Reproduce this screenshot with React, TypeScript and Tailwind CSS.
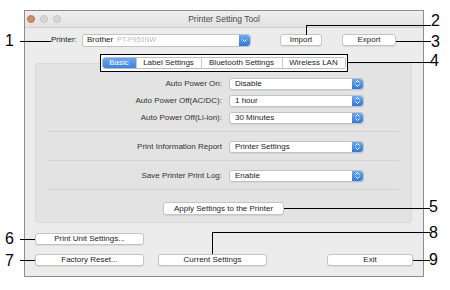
import React from "react";

// 드롭다운 오른쪽 파란 화살표 박스
function Arrow({ single }: { single?: boolean }) {
  return (
    <div className="w-[11px] h-full rounded-r-[3px] bg-gradient-to-b from-[#6eaaf0] to-[#2d78dc] flex items-center justify-center">
      {single ? (
        <svg width="7" height="7" viewBox="0 0 7 7">
          <path d="M1.5 2.5 L3.5 4.5 L5.5 2.5" stroke="white" strokeWidth="1" fill="none" />
        </svg>
      ) : (
        <svg width="7" height="9" viewBox="0 0 7 9">
          <path d="M1.5 3.5 L3.5 1.5 L5.5 3.5" stroke="white" strokeWidth="1" fill="none" />
          <path d="M1.5 5.5 L3.5 7.5 L5.5 5.5" stroke="white" strokeWidth="1" fill="none" />
        </svg>
      )}
    </div>
  );
}

function Select({ value, className }: { value: React.ReactNode; className: string }) {
  return (
    <div
      className={`flex items-stretch bg-white border border-[#c2c2c2] rounded-[3px] shadow-[0_1px_0_rgba(0,0,0,0.06)] ${className}`}
    >
      <div className="flex-1 flex items-center pl-[5px] text-[8px] text-[#1a1a1a] whitespace-nowrap overflow-hidden">
        {value}
      </div>
      <Arrow />
    </div>
  );
}

function Button({ label, className }: { label: string; className: string }) {
  return (
    <div
      className={`flex items-center justify-center bg-white border border-[#c4c4c4] rounded-[3px] shadow-[0_1px_0_rgba(0,0,0,0.08)] text-[8px] text-[#222] whitespace-nowrap ${className}`}
    >
      {label}
    </div>
  );
}

function Row({ label, value }: { label: string; value: string }) {
  return (
    <div className="flex items-center h-[17px]">
      <div className="w-[186px] text-right text-[8px] text-[#333] whitespace-nowrap">{label}</div>
      <Select value={value} className="ml-[7px] w-[135px] h-[12px]" />
    </div>
  );
}

const tabs = [
  { name: "Basic", w: "w-[34px]" },
  { name: "Label Settings", w: "w-[65px]" },
  { name: "Bluetooth Settings", w: "w-[81px]" },
  { name: "Wireless LAN", w: "w-[62px]" },
];

export default function App() {
  return (
    <div className="relative w-[450px] h-[290px] bg-white overflow-hidden pt-[10px] pl-[24px] font-['Liberation_Sans',Arial,sans-serif]">
      {/* 창 */}
      <div className="w-[400px] h-[267px] border border-[#8d8d8d] bg-[#ececec] flex flex-col">
        {/* 타이틀바 */}
        <div className="h-[17px] shrink-0 flex items-center border-b border-[#cdcdcd] bg-gradient-to-b from-[#eeeeee] to-[#e2e2e2]">
          <div className="w-[60px] flex items-center gap-[5px] pl-[2px]">
            <div className="w-[8px] h-[8px] rounded-full bg-[#cf8a68] border border-[#b9755a]" />
            <div className="w-[8px] h-[8px] rounded-full bg-[#d6d6d6] border border-[#c4c4c4]" />
            <div className="w-[8px] h-[8px] rounded-full bg-[#d6d6d6] border border-[#c4c4c4]" />
          </div>
          <div className="flex-1 text-center text-[8.5px] text-[#4a4a4a]">Printer Setting Tool</div>
          <div className="w-[60px]" />
        </div>

        {/* 프린터 선택 */}
        <div className="pt-[5px] pl-[26px]">
          <div className="flex items-center h-[14px]">
            <div className="w-[31px] text-[8px] text-[#222]">Printer:</div>
            <div className="w-[169px] h-[13px] flex items-stretch bg-white border border-[#c2c2c2] rounded-[3px]">
              <div className="flex-1 flex items-center pl-[4px] gap-[4px] text-[8px] text-[#1a1a1a]">
                Brother
                <span className="text-[7px] text-[#b8b8b8] blur-[0.6px]">PT-P950NW</span>
              </div>
              <Arrow single />
            </div>
            <Button label="Import" className="ml-[29px] w-[42px] h-[12px]" />
            <Button label="Export" className="ml-[20px] w-[54px] h-[12px]" />
          </div>
        </div>

        {/* 설정 패널 */}
        <div className="mt-[16px] ml-[10px] w-[377px] h-[160px] shrink-0 bg-[#e3e3e3] border border-[#d9d9d9] rounded-[3px] flex flex-col">
          <div className="-mt-[10px] self-center h-[18px] border border-black bg-white px-[1px] pt-[2px]">
            <div className="flex h-[12px] border border-[#bdbdbd] rounded-[3px] overflow-hidden">
              {tabs.map((t, i) => (
                <div
                  key={t.name}
                  className={`${t.w} flex items-center justify-center text-[8px] whitespace-nowrap ${
                    i === 0
                      ? "bg-gradient-to-b from-[#6aa6ee] to-[#3a83e0] text-white"
                      : "bg-white text-[#222]"
                  } ${i < tabs.length - 1 ? "border-r border-[#c8c8c8]" : ""}`}
                >
                  {t.name}
                </div>
              ))}
            </div>
          </div>

          <div className="pt-[3px]">
            <Row label="Auto Power On:" value="Disable" />
            <Row label="Auto Power Off(AC/DC):" value="1 hour" />
            <Row label="Auto Power Off(Li-ion):" value="30 Minutes" />
          </div>
          <div className="mt-[5px] mx-[12px] h-px bg-[#d3d3d3]" />
          <div className="mt-[6px]">
            <Row label="Print Information Report" value="Printer Settings" />
          </div>
          <div className="mt-[5px] mx-[12px] h-px bg-[#d3d3d3]" />
          <div className="mt-[6px]">
            <Row label="Save Printer Print Log:" value="Enable" />
          </div>
          <div className="mt-[5px] mx-[12px] h-px bg-[#d3d3d3]" />
          <Button label="Apply Settings to the Printer" className="mt-[12px] self-center w-[121px] h-[13px]" />
        </div>

        {/* 하단 버튼 */}
        <div className="pt-[10px] pl-[10px]">
          <Button label="Print Unit Settings..." className="w-[109px] h-[12px]" />
        </div>
        <div className="mt-[9px] flex pl-[10px] pr-[10px]">
          <Button label="Factory Reset..." className="w-[109px] h-[12px]" />
          <Button label="Current Settings" className="ml-[14px] w-[109px] h-[12px]" />
          <Button label="Exit" className="ml-auto w-[86px] h-[12px]" />
        </div>
      </div>

      {/* 콜아웃 선 */}
      <div className="absolute left-[20px] top-[41px] w-[31px] h-px bg-black" />
      <div className="absolute left-[306px] top-[25px] w-[125px] h-px bg-black" />
      <div className="absolute left-[306px] top-[25px] w-px h-[10px] bg-black" />
      <div className="absolute left-[396px] top-[41px] w-[35px] h-px bg-black" />
      <div className="absolute left-[347px] top-[62px] w-[84px] h-px bg-black" />
      <div className="absolute left-[284px] top-[208px] w-[146px] h-px bg-black" />
      <div className="absolute left-[212px] top-[232px] w-[218px] h-px bg-black" />
      <div className="absolute left-[212px] top-[232px] w-px h-[22px] bg-black" />
      <div className="absolute left-[413px] top-[260px] w-[17px] h-px bg-black" />
      <div className="absolute left-[20px] top-[239px] w-[15px] h-px bg-black" />
      <div className="absolute left-[20px] top-[260px] w-[15px] h-px bg-black" />

      {/* 콜아웃 번호 */}
      <div className="absolute left-[5px] top-[33px] text-[16px] leading-[16px] text-black">1</div>
      <div className="absolute left-[431px] top-[13px] text-[16px] leading-[16px] text-black">2</div>
      <div className="absolute left-[431px] top-[34px] text-[16px] leading-[16px] text-black">3</div>
      <div className="absolute left-[430px] top-[53px] text-[16px] leading-[16px] text-black">4</div>
      <div className="absolute left-[429px] top-[199px] text-[16px] leading-[16px] text-black">5</div>
      <div className="absolute left-[5px] top-[231px] text-[16px] leading-[16px] text-black">6</div>
      <div className="absolute left-[5px] top-[253px] text-[16px] leading-[16px] text-black">7</div>
      <div className="absolute left-[429px] top-[225px] text-[16px] leading-[16px] text-black">8</div>
      <div className="absolute left-[429px] top-[252px] text-[16px] leading-[16px] text-black">9</div>
    </div>
  );
}
